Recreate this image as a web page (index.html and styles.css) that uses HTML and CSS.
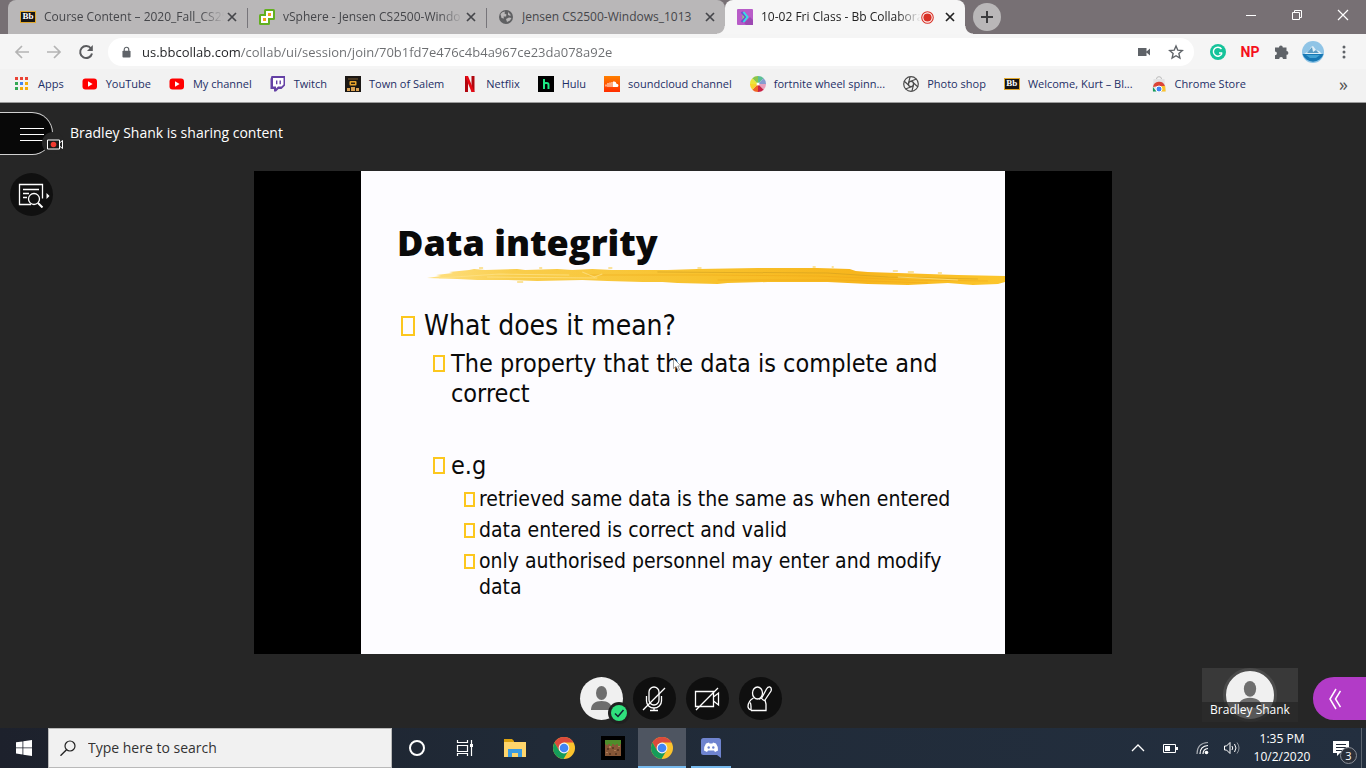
FILE: index.html
```html
<!DOCTYPE html>
<html lang="en">
<head>
<meta charset="utf-8">
<meta name="viewport" content="width=device-width, initial-scale=1">
<title>10-02 Fri Class - Bb Collaborate</title>
<link rel="stylesheet" href="styles.css">
</head>
<body>
<svg class="symbols" aria-hidden="true">
  <symbol id="close" viewBox="0 0 10 10"><path d="M1 1l8 8M9 1l-8 8" fill="none" stroke="currentColor" stroke-width="1.7"/></symbol>
  <symbol id="youtube" viewBox="0 0 16 16"><rect x="0.5" y="2.5" width="14.5" height="11" rx="3" fill="#f00"/><path d="M6 5.3v5.4L10.6 8z" fill="#fff"/></symbol>
  <symbol id="chrome" viewBox="0 0 24 24">
    <circle cx="12" cy="12" r="11" fill="#fbc32d"/>
    <path d="M12 1a11 11 0 0 1 9.500 5.500H12L7 14.500 2.500 6.500A11 11 0 0 1 12 1z" fill="#db4a3c"/>
    <path d="M2.500 6.500A11 11 0 0 0 11.500 23l5-8.500L7.200 14.700z" fill="#159c5a"/>
    <circle cx="12" cy="12" r="5.400" fill="#f4f4f4"/><circle cx="12" cy="12" r="4.300" fill="#4285f4"/>
  </symbol>
  <symbol id="person" viewBox="0 0 43 43"><ellipse cx="21.500" cy="16" rx="5.500" ry="7" fill="#6e6e6e"/><path d="M11 33c0-6 4-9 10.500-9S32 27 32 33z" fill="#6e6e6e"/></symbol>
</svg>

<header class="browser">
  <div class="tabstrip">
    <div class="tab">
      <span class="bb">Bb</span>
      <span class="tab-title">Course Content – 2020_Fall_CS25</span>
      <button class="tab-close" aria-label="Close tab"><svg><use href="#close"/></svg></button>
    </div>
    <div class="tab">
      <svg class="fav" viewBox="0 0 16 16"><rect x="5" y="0" width="11" height="11" rx="1.500" fill="#62b01e"/><rect x="0" y="5" width="11" height="11" rx="1.500" fill="#62b01e"/><path d="M7 2h7v7h-5v5H2V7h5z" fill="#fff"/><path d="M9 4h3v3H9zM4 9h3v3H4z" fill="#f6a21c"/></svg>
      <span class="tab-title">vSphere - Jensen CS2500-Windo</span>
      <button class="tab-close" aria-label="Close tab"><svg><use href="#close"/></svg></button>
    </div>
    <div class="tab">
      <svg class="fav" viewBox="0 0 16 16"><circle cx="8" cy="8" r="7" fill="#5f6062"/><path d="M2.500 5Q4 2.500 7 2.500L6.500 4.500 8.500 5.500 8 7.500H5.500L6 9.500 3.500 9zM8 10l3-1.500 2.500.500-1.500 2.500-3 1.500zM10 3l2.500 2.500v1.500L10 6z" fill="#b9b7b8"/></svg>
      <span class="tab-title">Jensen CS2500-Windows_1013</span>
      <button class="tab-close" aria-label="Close tab"><svg><use href="#close"/></svg></button>
    </div>
    <div class="tab tab-active">
      <svg class="fav" viewBox="0 0 16 16"><rect width="16" height="16" rx="1" fill="#b85cc8"/><path d="M7 14l6-6 3 3v5H9z" fill="#9d48b3"/><path d="M4.500 3l4.500 5-4.500 5" fill="none" stroke="#6e54cf" stroke-width="2"/><path d="M6.500 3l4 5-4 5" fill="none" stroke="#35dfe6" stroke-width="2"/><path d="M5 6.500L7 8 5 9.500" fill="none" stroke="#7fe070"/></svg>
      <span class="tab-title">10-02 Fri Class - Bb Collabora</span>
      <svg class="rec" viewBox="0 0 12 12"><circle cx="6" cy="6" r="5.300" fill="#fff" stroke="#d93025"/><circle cx="6" cy="6" r="3.800" fill="#d93025"/></svg>
      <button class="tab-close" aria-label="Close tab"><svg><use href="#close"/></svg></button>
    </div>
    <button class="newtab" aria-label="New tab"><svg viewBox="0 0 12 12"><path d="M6 0v12M0 6h12" stroke="#3c3c3e" stroke-width="2"/></svg></button>
    <div class="window-buttons">
      <button aria-label="Minimize"><svg viewBox="0 0 10 10"><path d="M0 5.500h10" stroke="#fff"/></svg></button>
      <button aria-label="Restore"><svg viewBox="0 0 10 10"><path d="M.500 2.500h7v7h-7zM2.500 2V.500h7v7H8" fill="none" stroke="#fff"/></svg></button>
      <button aria-label="Close"><svg viewBox="0 0 10 10"><path d="M0 0l10 10M10 0L0 10" stroke="#fff" stroke-width="1.200"/></svg></button>
    </div>
  </div>

  <div class="toolbar">
    <button class="nav nav-off" aria-label="Back"><svg viewBox="0 0 16 16"><path d="M15 8H2M8 2L2 8l6 6" fill="none" stroke="currentColor" stroke-width="1.700"/></svg></button>
    <button class="nav nav-off" aria-label="Forward"><svg viewBox="0 0 16 16"><path d="M1 8h13M8 2l6 6-6 6" fill="none" stroke="currentColor" stroke-width="1.700"/></svg></button>
    <button class="nav" aria-label="Reload"><svg viewBox="0 0 16 16"><path d="M13 4.500A6 6 0 1 0 14 9.500" fill="none" stroke="currentColor" stroke-width="2"/><path d="M14.800 1v6H9z" fill="currentColor"/></svg></button>
    <div class="omnibox">
      <svg class="lock" viewBox="0 0 10 12"><path d="M2.500 5V3.200a2.500 2.500 0 0 1 5 0V5" fill="none" stroke="#5f6368" stroke-width="1.300"/><rect x=".500" y="4.500" width="9" height="7.500" rx="1" fill="#5f6368"/></svg>
      <input class="url" type="text" aria-label="Address" value="us.bbcollab.com/collab/ui/session/join/70b1fd7e476c4b4a967ce23da078a92e">
      <button class="omni-btn" aria-label="Camera"><svg viewBox="0 0 16 16"><path d="M2 4h8.500v8H2zM10.500 7.500L14 4.500v7l-3.500-3z" fill="#5f6368"/></svg></button>
      <button class="omni-btn" aria-label="Bookmark"><svg viewBox="0 0 16 16"><path d="M8 2l1.800 4.200 4.500.400-3.400 3 1 4.400L8 11.700 4.100 14l1-4.400-3.400-3 4.500-.400z" fill="none" stroke="#5f6368" stroke-width="1.400"/></svg></button>
    </div>
    <div class="extensions">
      <button aria-label="Grammarly"><svg viewBox="0 0 16 16"><circle cx="8" cy="8" r="8" fill="#15c39a"/><path d="M11.500 5A4.500 4.500 0 1 0 12 9.500M12.300 9H9" fill="none" stroke="#fff" stroke-width="1.400"/></svg></button>
      <button class="np">NP</button>
      <button aria-label="Extensions"><svg viewBox="0 0 16 16"><path d="M5 3.500a1.900 1.900 0 0 1 3.800 0H12.500V7a1.900 1.900 0 0 1 0 3.800V15H9a1.900 1.900 0 0 0-3.800 0H1v-3.800a1.900 1.900 0 0 0 0-3.800V3.500z" fill="#5f6368"/></svg></button>
      <button class="profile" aria-label="Profile"><svg viewBox="0 0 22 22"><circle cx="11" cy="11" r="11" fill="#8fc4e6"/><path d="M.500 13h21a11 11 0 0 1-21 0z" fill="#1878b4"/><path d="M2 13l5-3 2-4 2-1 3 4 3 1 3 3z" fill="#e0f0f8"/><path d="M5 12l5-6 1 5 3-2 3 3z" fill="#5b9cc4"/><path d="M4 14h14l-4 3H8z" fill="#43a2d3"/></svg></button>
      <button class="dots" aria-label="Menu"><svg viewBox="0 0 4 14"><g fill="#5f6368"><circle cx="2" cy="2" r="1.500"/><circle cx="2" cy="7" r="1.500"/><circle cx="2" cy="12" r="1.500"/></g></svg></button>
    </div>
  </div>

  <nav class="bookmarks" aria-label="Bookmarks">
    <a href="#"><svg viewBox="0 0 16 16"><path d="M1 1h3v3H1zM6 1h3v3H6zM11 1h3v3h-3z" fill="#ea4335"/><path d="M1 6h3v3H1zM1 11h3v3H1z" fill="#34a853"/><path d="M6 6h3v3H6z" fill="#4285f4"/><path d="M11 6h3v3h-3zM6 11h3v3H6zM11 11h3v3h-3z" fill="#f4ac0b"/></svg>Apps</a>
    <a href="#"><svg><use href="#youtube"/></svg>YouTube</a>
    <a href="#"><svg><use href="#youtube"/></svg>My channel</a>
    <a href="#"><svg viewBox="0 0 16 16"><path d="M1.500 0H15v9.500L11.500 13H8.500L6 15.500H4V13H.500V3z" fill="#6441a5"/><path d="M3 2h10.500v6.500l-2 2H8L6 12.500v-2H3z" fill="#fff"/><path d="M6.700 4.500v3.700M10.200 4.500v3.700" stroke="#6441a5" stroke-width="1.400"/></svg>Twitch</a>
    <a href="#"><svg viewBox="0 0 16 16"><rect width="16" height="16" fill="#1b1714"/><path d="M3 2h10v2H3z" fill="#4a3821"/><rect x="4.500" y="5" width="7" height="4.500" rx="1" fill="#e9a52c"/><path d="M6 6.500h4V8H6z" fill="#33220e"/><path d="M2 12h3v3H2zM6 11h4v4H6zM11 12h3v3h-3z" fill="#d8a052"/></svg>Town of Salem</a>
    <a href="#"><svg viewBox="0 0 16 16"><path d="M3 0h3v16H3zM9.500 0h3v16h-3z" fill="#b1060f"/><path d="M3 0h3l6.500 16h-3z" fill="#e50914"/></svg>Netflix</a>
    <a href="#"><svg viewBox="0 0 16 16"><rect width="16" height="16"/><path d="M6 3v10M6 8.500q0-1.500 1.500-1.500h1.300Q10.500 7 10.500 8.700V13" fill="none" stroke="#1ce783" stroke-width="2"/></svg>Hulu</a>
    <a href="#"><svg viewBox="0 0 16 16"><linearGradient id="sc" x2="0" y2="1"><stop stop-color="#ff8000"/><stop offset="1" stop-color="#ff2d00"/></linearGradient><rect width="16" height="16" fill="url(#sc)"/><path d="M2 8.500v2M4 7v4M6 6.500V11M8 6v5" stroke="#fff"/><path d="M9 5.600q3-.800 3.500 2.100 2 0 2 1.700Q14.300 11 13 11H9z" fill="#fff"/></svg>soundcloud channel</a>
    <a href="#"><svg viewBox="0 0 16 16"><path d="M8 8V0a8 8 0 0 1 5.700 2.300z" fill="#5bbf98"/><path d="M8 8l5.700-5.700A8 8 0 0 1 16 8z" fill="#879bd0"/><path d="M8 8h8a8 8 0 0 1-2.300 5.700z" fill="#e7a1be"/><path d="M8 8l5.700 5.700A8 8 0 0 1 8 16z" fill="#ca2146"/><path d="M8 8v8a8 8 0 0 1-5.700-2.300z" fill="#f06425"/><path d="M8 8l-5.700 5.700A8 8 0 0 1 0 8z" fill="#f8d32c"/><path d="M8 8H0a8 8 0 0 1 2.300-5.700z" fill="#ece53a"/><path d="M8 8L2.300 2.300A8 8 0 0 1 8 0z" fill="#8cc64b"/><circle cx="8" cy="8" r="1.500" fill="#fff"/></svg>fortnite wheel spinn...</a>
    <a href="#"><svg viewBox="0 0 16 16"><g fill="none" stroke="#4b4b4b" stroke-width="1.200"><circle cx="8" cy="8" r="7.300"/><circle cx="8" cy="8" r="2.600"/><path d="M5.500 7.500L7 .800M7 5.500l6.500-2.500M10 6.500l5 4.500M10.500 8.500L9 15.200M9 10.500L2.500 13M6 9.500L1 5"/></g></svg>Photo shop</a>
    <a href="#"><span class="bb">Bb</span>Welcome, Kurt – Bl...</a>
    <a href="#"><svg viewBox="0 0 16 16"><path d="M5.500 3q0-2.300 2.500-2.300T10.500 3" fill="none" stroke="#bbb"/><path d="M2.500 3h11l1 12.500h-13z" fill="#e2e3e4"/><path d="M2 11a6.200 6.200 0 0 1 12-1H8z" fill="#db4437"/><path d="M1.900 11l3.500 4.500H2z" fill="#159c5a"/><path d="M10 10h4.200l.500 5.500H9z" fill="#fbc32d"/><circle cx="8" cy="13" r="3" fill="#4285f4" stroke="#fff"/></svg>Chrome Store</a>
    <button class="more" aria-label="More bookmarks">»</button>
  </nav>
</header>

<main class="collab">
  <div class="collab-head">
    <button class="session-menu" aria-label="Open session menu">
      <svg class="burger" viewBox="0 0 24 14"><path d="M0 1.500h24M0 7.500h24M0 13.500h24" stroke="#fff"/></svg>
      <span class="recording"><svg viewBox="0 0 16 11"><path d="M.500 1h12v9H.500z" fill="#191919" stroke="#fff"/><path d="M12.500 4l3-2.500v8l-3-2.500" fill="none" stroke="#fff"/><circle cx="6.500" cy="5.500" r="2.800" fill="#f03a30"/></svg></span>
    </button>
    <p class="sharing">Bradley Shank is sharing content</p>
  </div>

  <div class="collab-body">
    <button class="view-tools" aria-label="View controls"><svg viewBox="0 0 34 26"><g fill="none" stroke="#fff" stroke-width="1.300"><path d="M13 22.500H1.500v-20h23v14"/><path d="M5 7.500h16M5 11.500h6M5 15.500h4"/><circle cx="16" cy="17" r="5.500"/><path d="M20 21l4.500 4.500" stroke-width="2"/></g><path d="M28.500 11l3 3-3 3z" fill="#fff"/></svg></button>
    <div class="stage">
      <article class="slide">
        <h1>Data integrity</h1>
        <svg class="brush" viewBox="0 0 577 22" preserveAspectRatio="none">
          <linearGradient id="paint"><stop stop-color="#ffe184"/><stop offset=".15" stop-color="#f9cd4b"/><stop offset=".5" stop-color="#f8c12b"/><stop offset=".75" stop-color="#f7b51c"/><stop offset="1" stop-color="#fcc62c"/></linearGradient>
          <path d="M0 12L14 10 9 9 26 7 22 6 42 4 47 3 58 4 90 3 98 4 130 3 145 4 165 3 185 4 240 4 270 3 330 2 390 2 422 3 428 5 440 6 470 7 500 8 530 9 577 10V16L570 18 545 19 520 17 480 19 440 18 400 16 340 16 300 17 290 18 250 17 235 16 215 16 180 15 155 14 110 15 80 14 50 14 30 13z" fill="url(#paint)"/>
          <g fill="none" stroke="#eea617" opacity=".5"><path d="M160 9l120 0 110 1 90 4 80 1"/><path d="M230 6l170 1 60 4 90 2" stroke="#c99a20"/><path d="M290 14h120l90 3"/></g>
          <g fill="none" stroke="#ffe48b" opacity=".7"><path d="M12 12l60-4 70 1"/><path d="M60 11l110 1M155 6l12 5 8-3M470 11l60 3"/></g>
          <path d="M385 1h3M404 1h2M465 5h5M480 6h6M510 7h4M90 16h6M52 2h4M112 2h3M181 2h4M270 2h4" stroke="#f9c938"/>
        </svg>
        <ul class="points">
          <li>What does it mean?
            <ul>
              <li>The property that the data is complete and correct</li>
              <li class="example">e.g
                <ul>
                  <li>retrieved same data is the same as when entered</li>
                  <li>data entered is correct and valid</li>
                  <li>only authorised personnel may enter and modify data</li>
                </ul>
              </li>
            </ul>
          </li>
        </ul>
        <svg class="pointer" viewBox="0 0 9 13"><path d="M.500.500v10l2.500-2 2 4 1.500-.700-1.700-3.800H8z" fill="#fff" stroke="#777" stroke-width=".700"/></svg>
      </article>
    </div>
  </div>

  <div class="collab-foot">
    <div class="controls">
      <button class="round me" aria-label="My status"><svg class="full"><use href="#person"/></svg><span class="ok"><svg viewBox="0 0 16 16"><circle cx="8" cy="8" r="8" fill="#2fe07c"/><path d="M4 8.500l3 3 5.500-6.500" fill="none" stroke="#123" stroke-width="1.500"/></svg></span></button>
      <button class="round" aria-label="Turn microphone on"><svg viewBox="0 0 24 26"><g fill="none" stroke="#fff" stroke-width="1.300"><rect x="7" y="1" width="10" height="18" rx="5"/><path d="M4.500 10v5a7.500 7 0 0 0 15 0v-5M12 22v2M8 24.500h8M1 24L23 2"/></g></svg></button>
      <button class="round" aria-label="Turn camera on"><svg viewBox="0 0 26 26"><g fill="none" stroke="#fff" stroke-width="1.300"><path d="M1.500 5.500h18v15h-18zM19.500 11l5-4v12l-5-4M2 24L24 2"/></g></svg></button>
      <button class="round" aria-label="Raise hand"><svg viewBox="0 0 26 26"><g fill="none" stroke="#fff" stroke-width="1.300"><ellipse cx="10.500" cy="7" rx="5" ry="6"/><path d="M6.500 12C3 14 1 17 1 20.500q0 2.500 3 3.500M4 24.500v-4q0-3-1-4M4 24.500h15V18l-1-4 6-9q1-3-1-4-2-.500-3.500 2L15 11.500q-1 1.500-3 1.500M17.500 14.500q-2-.500-3-2.500"/></g></svg></button>
    </div>
    <div class="side">
      <figure class="attendee"><div class="avatar"><svg><use href="#person"/></svg></div><figcaption>Bradley Shank</figcaption></figure>
      <button class="open-panel" aria-label="Open Collaborate panel"><svg viewBox="0 0 12 22"><path d="M7 1L1 11l6 10M11.500 3L6.500 11l5 8" fill="none" stroke="#fff" stroke-width="1.500"/></svg></button>
    </div>
  </div>
</main>

<footer class="taskbar">
  <button class="start" aria-label="Start"><svg viewBox="0 0 16 16"><path d="M0 2.300L6.500 1.400V7.500H0zM7.300 1.300L16 0v7.500H7.300zM0 8.300h6.500v6.200L0 13.600zM7.300 8.300H16V16l-8.700-1.300z" fill="#fff"/></svg></button>
  <label class="search">
    <svg viewBox="0 0 16 16"><circle cx="10" cy="6" r="5" fill="none" stroke="#222" stroke-width="1.200"/><path d="M6.500 9.700L.500 15.700" stroke="#222" stroke-width="1.400"/></svg>
    <input type="text" placeholder="Type here to search" aria-label="Type here to search">
  </label>
  <div class="apps">
    <button class="app" aria-label="Cortana"><svg viewBox="0 0 24 24"><circle cx="12" cy="12" r="7" fill="none" stroke="#fff" stroke-width="2"/></svg></button>
    <button class="app" aria-label="Task View"><svg viewBox="0 0 24 24"><g fill="none" stroke="#fff" stroke-width="1.200"><path d="M3.500 4v2.500h10V4M3.500 9.500h10v6h-10zM3.500 20v-2.500h10V20M17.500 4v16"/></g><path d="M16 8h3v3h-3z" fill="#fff"/></svg></button>
    <button class="app" aria-label="File Explorer"><svg viewBox="0 0 24 24"><path d="M1 3h8l2 2v4H1z" fill="#dba20f"/><path d="M1 6h22v15H1z" fill="#fed56b"/><path d="M5 21v-8h14v8h-4v-4H9v4z" fill="#3a9be0"/></svg></button>
    <button class="app" aria-label="Google Chrome"><svg><use href="#chrome"/></svg></button>
    <button class="app" aria-label="Minecraft"><svg viewBox="0 0 24 24"><rect width="24" height="24"/><rect x="4" y="4" width="16" height="16" fill="#875737"/><path d="M4 4h16v4h-1v2h-2V8h-2v1h-2V8h-2v2H9V8H7v1H5V8H4z" fill="#4f8d2b"/><path d="M6 12h2v2H6zM11 11h2v2h-2zM16 13h2v2h-2zM8 17h2v2H8zM14 17h2v2h-2z" fill="#5f3b24"/><path d="M8 10h2v2H8zM13 14h2v1h-2zM5 16h2v1H5zM17 10h2v1h-2z" fill="#af7b56"/></svg></button>
    <button class="app app-active" aria-label="Google Chrome, open"><svg><use href="#chrome"/></svg></button>
    <button class="app app-open" aria-label="Discord"><svg viewBox="0 0 24 24"><path d="M4.500 2h15A2.500 2.500 0 0 1 22 4.500V22l-4-3H4.500A2.500 2.500 0 0 1 2 16.500v-12A2.500 2.500 0 0 1 4.500 2z" fill="#6f84cf"/><path d="M5 14.500Q5 10 7 7.500L10 6.500l.500 1h3l.500-1 3 1q2 2.500 2 7L16 16l-1-1.500H9L8 16z" fill="#fff"/><circle cx="9.700" cy="11.500" r="1.200" fill="#6f84cf"/><circle cx="14.300" cy="11.500" r="1.200" fill="#6f84cf"/></svg></button>
  </div>
  <div class="tray">
    <button aria-label="Hidden icons"><svg viewBox="0 0 16 16"><path d="M2 11l6-6 6 6" fill="none" stroke="#fff" stroke-width="1.300"/></svg></button>
    <button aria-label="Battery"><svg viewBox="0 0 16 16"><path d="M1.500 4.500h12v8h-12z" fill="none" stroke="#fff"/><path d="M3 6h5v5H3zM14 7h2v3h-2z" fill="#fff"/></svg></button>
    <button class="wifi" aria-label="Wi-Fi"><svg viewBox="0 0 16 16"><g fill="none" stroke="#fff" stroke-width="1.200"><path d="M2 14Q2 3 13 2.500" opacity=".6"/><path d="M5 14Q5 6 13 5.500M8 14Q8 9 13 8.500"/></g><circle cx="11.500" cy="12.500" r="1.800" fill="#fff"/></svg></button>
    <button class="volume" aria-label="Volume"><svg viewBox="0 0 16 16"><g fill="none" stroke="#fff"><path d="M.500 6h2L6 2.500v11L2.500 10h-2zM8 6q1.500 2 0 4M10.500 4q3 4 0 8"/><path d="M13 2.500q4 5.500 0 11" opacity=".5"/></g></svg></button>
    <time class="clock" datetime="2020-10-02T13:35">1:35 PM<br>10/2/2020</time>
    <button class="notice" aria-label="3 notifications"><svg viewBox="0 0 16 16"><path d="M0 1h16v12H7l-3 3v-3H0z" fill="#fff"/><path d="M3 4.500h10M3 7.500h10M3 10.500h6" stroke="#222c3a"/></svg><span>3</span></button>
  </div>
</footer>
</body>
</html>
```
FILE: styles.css
```css
*, *::before, *::after { box-sizing: border-box; }
body {
  margin: 0;
  min-height: 100vh;
  display: flex;
  flex-direction: column;
  overflow-x: hidden;
  background: #262626;
  font: 12px/16px "Open Sans", "Noto Sans", sans-serif;
}
button {
  display: flex;
  align-items: center;
  justify-content: center;
  flex: none;
  padding: 0;
  border: 0;
  background: none;
  color: inherit;
  font: inherit;
}
svg { display: block; flex: none; width: 16px; height: 16px; }
.symbols { position: absolute; width: 0; height: 0; }

/* Tab strip */
.tabstrip { display: flex; height: 34px; padding-left: 8px; background: #777074; }
.tab {
  position: relative;
  display: flex;
  align-items: center;
  flex: 0 1 239px;
  min-width: 0;
  padding: 0 7px 0 12px;
  background: #b9b7b8;
  color: #45464a;
}
.tab:first-child { border-radius: 8px 0 0 0; }
.tab:not(.tab-active) + .tab:not(.tab-active)::before {
  content: "";
  position: absolute;
  left: 0;
  top: 8px;
  width: 1px;
  height: 20px;
  background: #77757a;
}
.tab:nth-child(3) { border-radius: 0 8px 8px 0; }
.tab-active { flex-basis: 240px; background: #f6f6f6; color: #222; border-radius: 8px 8px 0 0; z-index: 1; }
.tab-active::before, .tab-active::after {
  content: "";
  position: absolute;
  bottom: 0;
  width: 8px;
  height: 8px;
}
.tab-active::before { left: -8px; background: radial-gradient(circle at 0 0, #b9b7b8 7px, #f6f6f6 8px); }
.tab-active::after { right: -8px; background: radial-gradient(circle at 100% 0, #777074 7px, #f6f6f6 8px); }
.tab-title {
  flex: 1;
  margin-left: 8px;
  overflow: hidden;
  white-space: nowrap;
  mask-image: linear-gradient(to left, transparent, #000 24px);
}
.tab:nth-child(3) .tab-title { mask-image: none; }
.tab-close svg { width: 10px; height: 10px; margin: 3px; }
.rec { width: 13px; height: 13px; margin-right: 8px; }
.bb {
  flex: none;
  width: 16px;
  height: 12px;
  border: 1px solid #e0a82e;
  background: #161616;
  color: #fff;
  font: bold 9px/9px "Liberation Serif", serif;
  text-align: center;
}
.newtab { width: 28px; height: 28px; margin: 3px 0 0 8px; border-radius: 50%; background: #b9b7b8; }
.newtab svg { width: 12px; height: 12px; }
.window-buttons { display: flex; margin-left: auto; height: 29px; }
.window-buttons button { width: 46px; }
.window-buttons svg { width: 10px; height: 10px; overflow: visible; }

/* Toolbar */
.toolbar { display: flex; align-items: center; height: 35px; padding: 0 14px; background: #f5f5f5; }
.nav { width: 16px; margin-right: 16px; color: #5a5b5e; }
.nav-off { color: #b4b4b4; }
.nav:nth-child(3) { margin-right: 14px; }
.omnibox {
  display: flex;
  align-items: center;
  flex: 1;
  height: 28px;
  padding: 0 10px 0 14px;
  border-radius: 14px;
  background: #fff;
}
.lock { width: 9px; height: 12px; margin-right: 11px; }
.url {
  flex: 1;
  min-width: 0;
  padding: 0;
  border: 0;
  outline: 0;
  background: linear-gradient(90deg, #202124 98px, #6b6d70 98px) text;
  color: transparent;
  font: 13px/20px "Open Sans", sans-serif;
}
.omni-btn { margin-left: 16px; }
.extensions { display: flex; align-items: center; gap: 16px; padding-left: 16px; }
.np { width: 16px; color: #f5101c; font: bold 14px/20px Roboto, sans-serif; }
.profile { margin: 0 -4px; }
.profile svg { width: 22px; height: 22px; }
.dots { width: 4px; margin: 0 6px; }
.dots svg { width: 4px; height: 14px; }

/* Bookmarks */
.bookmarks {
  display: flex;
  align-items: center;
  height: 34px;
  padding: 0 18px 4px 14px;
  gap: 18px;
  border-bottom: 1px solid #9b9b9b;
  background: #f2f2f2;
}
.bookmarks a {
  display: flex;
  align-items: center;
  gap: 8px;
  color: #1d2f66;
  font-size: 11px;
  text-decoration: none;
  white-space: nowrap;
}
.more { margin-left: auto; color: #555; font-size: 18px; }

/* Collaborate session */
.collab { flex: 1; display: flex; flex-direction: column; color: #fff; }
.collab-head { display: flex; align-items: flex-start; height: 68px; padding-top: 9px; }
.session-menu {
  position: relative;
  justify-content: flex-start;
  width: 53px;
  height: 43px;
  padding-left: 20px;
  border: 1px solid #d0d0d0;
  border-left: 0;
  border-radius: 0 21px 21px 0;
  background: #080808;
}
.burger { width: 24px; height: 14px; }
.recording {
  position: absolute;
  right: -12px;
  top: 19px;
  width: 22px;
  height: 22px;
  padding: 7px 0 0 5px;
  border-radius: 50%;
  background: #262626;
}
.recording svg { width: 16px; height: 11px; }
.sharing { margin: 11px 0 0 17px; font-size: 14px; line-height: 20px; }
.collab-body { flex: 1; display: grid; }
.collab-body > * { grid-area: 1 / 1; }
.view-tools { width: 43px; height: 43px; margin: 2px 0 0 10px; padding-left: 6px; border-radius: 50%; background: #101010; }
.view-tools svg { width: 34px; height: 26px; }
.stage {
  display: flex;
  justify-content: center;
  justify-self: center;
  height: 100%;
  aspect-ratio: 16 / 9;
  background: #000;
}
.slide {
  position: relative;
  height: 100%;
  aspect-ratio: 4 / 3;
  padding: 52px 0 0 36px;
  background: #fdfcff;
  color: #0a0a0a;
  font-family: "DejaVu Sans Condensed", "Noto Sans", sans-serif;
}
.slide h1 { margin: 0; font: 800 36px/40px "Open Sans", sans-serif; }
.brush { width: calc(100% - 30px); height: 22px; margin: 3px 0 0 30px; }
.points { margin: 20px 40px 0 0; }
.points, .points ul { padding: 0; list-style: none; }
.points ul { margin: 5px 0 0; }
.points li { position: relative; padding-left: 27px; font-size: 28px; line-height: 36px; }
.points li li { padding-left: 27px; font-size: 25px; line-height: 30px; }
.points li li li { padding-left: 28px; font-size: 21px; line-height: 26px; }
.points li li li + li { margin-top: 5px; }
.points .example { margin-top: 42px; }
.points li::before {
  content: "";
  position: absolute;
  left: 4px;
  top: 8px;
  width: 14px;
  height: 20px;
  border: 2px solid #fcc71e;
}
.points li li::before { left: 9px; top: 6px; width: 12px; height: 17px; }
.points li li li::before { left: 13px; top: 6px; width: 11px; height: 15px; }
.pointer { position: absolute; left: 312px; top: 187px; width: 9px; height: 13px; }

.collab-foot { display: grid; grid-template-columns: 1fr auto 1fr; height: 74px; }
.controls { grid-column: 2; display: flex; align-items: flex-start; gap: 10px; padding: 23px 5px 0 0; }
.round { position: relative; width: 43px; height: 43px; border-radius: 50%; background: #0f0f0f; }
.round svg { width: 26px; height: 26px; }
.me { background: #f0f0f0; }
.round .full { width: 43px; height: 43px; }
.ok { position: absolute; left: 28px; top: 25px; padding: 3px; border-radius: 50%; background: #202020; }
.ok svg { width: 16px; height: 16px; }
.side { display: flex; justify-content: flex-end; align-items: flex-start; }
.attendee {
  position: relative;
  display: flex;
  justify-content: center;
  width: 96px;
  height: 54px;
  margin: 14px 15px 0 0;
  overflow: hidden;
  background: #393939;
}
.avatar { width: 54px; height: 54px; border: 3px solid #4b4b4b; border-radius: 50%; background: #f0f0f0; }
.avatar svg { width: 48px; height: 48px; }
.attendee figcaption {
  position: absolute;
  inset: auto 0 0;
  height: 20px;
  background: rgb(38 38 38 / 75%);
  text-align: center;
}
.open-panel { width: 53px; height: 43px; margin-top: 23px; padding-right: 9px; border-radius: 21px 0 0 21px; background: #b23bc7; }
.open-panel svg { width: 12px; height: 22px; }

/* Windows taskbar */
.taskbar { display: flex; height: 40px; background: linear-gradient(90deg, #1d212c, #202a37 40%, #232f3f); color: #fff; }
.start { width: 48px; }
.search {
  display: flex;
  align-items: center;
  flex: 0 1 344px;
  padding: 0 11px;
  gap: 12px;
  border: 1px solid #b9b9b9;
  background: #f1f1f1;
}
.search input { flex: 1; min-width: 0; padding: 0; border: 0; outline: 0; background: none; font: 14px/20px "Open Sans", sans-serif; }
.search input::placeholder { color: #333; opacity: 1; }
.apps { display: flex; gap: 1px; margin-left: 1px; }
.app { position: relative; width: 48px; }
.app svg { width: 24px; height: 24px; }
.app-active { background: #4e5561; }
.app-active::after, .app-open::after {
  content: "";
  position: absolute;
  inset: auto 0 0;
  height: 2px;
  background: #76b9ed;
}
.app-open::after { inset: auto 4px 0; }
.tray { display: flex; align-items: center; margin-left: auto; padding-right: 4px; }
.tray button { width: 32px; height: 40px; }
.tray .wifi { width: 34px; }
.tray .volume { width: 24px; }
.clock { width: 76px; font-size: 12px; line-height: 18px; text-align: center; }
.tray .notice { position: relative; width: 42px; border-right: 1px solid #5c6570; }
.notice span {
  position: absolute;
  left: 20px;
  top: 19px;
  width: 17px;
  height: 17px;
  border: 1px solid #8b9099;
  border-radius: 50%;
  background: #2b303a;
  font-size: 11px;
  line-height: 15px;
}
```
